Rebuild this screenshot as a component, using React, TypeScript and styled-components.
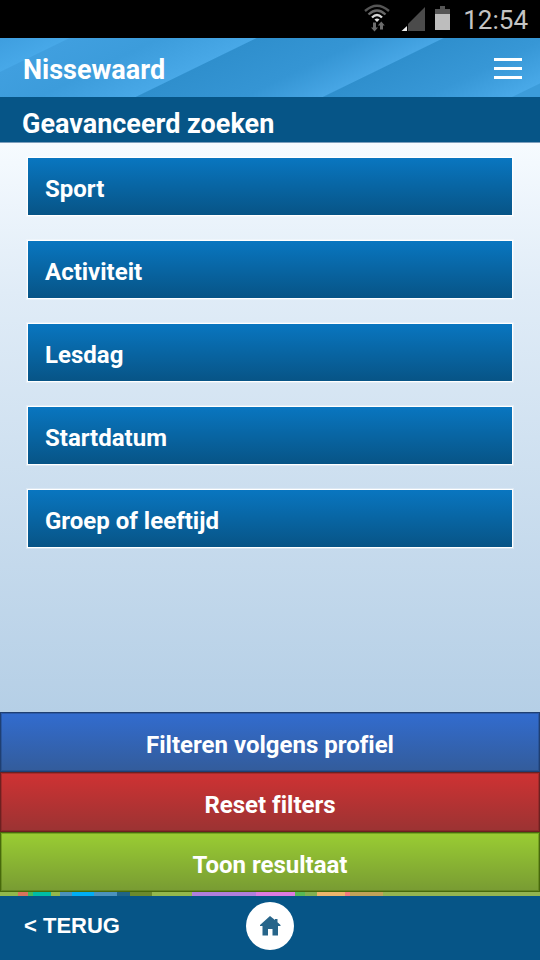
import React from "react";
import styled, { createGlobalStyle } from "styled-components";

const GlobalStyle = createGlobalStyle`
  *, *::before, *::after { box-sizing: border-box; }
  body {
    margin: 0;
    font-family: Roboto, "Liberation Sans", sans-serif;
    font-variant-ligatures: none;
  }
  button { font: inherit; font-variant-ligatures: none; cursor: pointer; }
`;

const Screen = styled.div`
  display: flex;
  flex-direction: column;
  min-height: 100vh;
  background: #b5cfe6;
`;

const StatusBar = styled.div`
  display: flex;
  align-items: center;
  justify-content: flex-end;
  height: 38px;
  padding: 2px 12px 0 0;
  background: #000;
  color: #c4c4c4;
`;

const StatusIcons = styled.svg`
  display: block;
  width: 90px;
  height: 36px;
  margin-right: 10px;
`;

const Clock = styled.time`
  font-size: 26px;
  line-height: 36px;
`;

const Header = styled.header`
  display: flex;
  align-items: center;
  justify-content: space-between;
  height: 59px;
  padding: 4px 18px 0 23px;
  background: linear-gradient(
    154deg,
    #3e9edf 0,
    #47a8e8 30px,
    #409fdf 31px,
    #3c9cdb 70px,
    #48a8e7 112px,
    #2f8fcd 113px,
    #3595d4 160px,
    #47a6e5 194px,
    #2f8fcd 195px,
    #3797d6 240px,
    #49a9e8 277px,
    #3c9cda 278px
  );
`;

const Brand = styled.div`
  color: #fff;
  font-size: 27px;
  font-weight: 700;
  line-height: 32px;
`;

const MenuButton = styled.button`
  display: flex;
  flex-direction: column;
  justify-content: space-between;
  width: 28px;
  height: 21px;
  margin-bottom: 2px;
  padding: 0;
  border: 0;
  background: none;
`;

const MenuLine = styled.span`
  height: 3px;
  background: #fff;
`;

const TitleBar = styled.div`
  height: 46px;
  padding: 6px 22px 0;
  border-bottom: 1px solid #7d9fbd;
  background: #065587;
`;

const Title = styled.h1`
  margin: 0;
  color: #fff;
  font-size: 27px;
  font-weight: 700;
  line-height: 42px;
`;

const Main = styled.main`
  flex: 1;
  padding: 14px 27px;
  background: linear-gradient(#f6fbff, #e0ecf7 26%, #b5cfe6);
`;

const FilterList = styled.div`
  display: grid;
  gap: 24px;
`;

const FilterButton = styled.button`
  height: 59px;
  padding: 5px 17px 0;
  border: 1px solid #fff;
  background: linear-gradient(#0976c0, #075486);
  box-shadow: 0 0 0 1px rgba(255, 255, 255, 0.3);
  color: #fff;
  font-size: 24px;
  font-weight: 700;
  line-height: 28px;
  text-align: left;
`;

const Actions = styled.div`
  display: grid;
`;

const tones = {
  blue: { from: "#326ccf", to: "#335c9b", edge: "#1f3f72" },
  red: { from: "#cf3233", to: "#9b3333", edge: "#6d2020" },
  green: { from: "#9acd33", to: "#789b33", edge: "#47690b" },
};

const ActionButton = styled.button<{ $tone: keyof typeof tones }>`
  height: 60px;
  padding: 6px 16px 0;
  border: 1px solid ${(p) => tones[p.$tone].edge};
  background: linear-gradient(
    ${(p) => tones[p.$tone].from},
    ${(p) => tones[p.$tone].to}
  );
  box-shadow: inset 0 0 0 1px ${(p) => tones[p.$tone].edge}66;
  color: #fff;
  font-size: 24px;
  font-weight: 700;
  line-height: 28px;
`;

const ColourStrip = styled.div`
  display: flex;
  height: 4px;
`;

const Swatch = styled.span<{ $share: number; $colour: string }>`
  flex: ${(p) => p.$share} 1 0;
  background: ${(p) => p.$colour};
`;

const Footer = styled.footer`
  display: grid;
  grid-template-columns: 1fr auto 1fr;
  align-items: center;
  height: 64px;
  padding: 0 24px 4px;
  background: #065587;
`;

const BackLink = styled.a`
  justify-self: start;
  color: #fff;
  font-family: "Liberation Sans", Arial, sans-serif;
  font-size: 22px;
  font-weight: 700;
  line-height: 28px;
  text-decoration: none;
`;

const HomeLink = styled.a`
  display: grid;
  place-items: center;
  width: 48px;
  height: 48px;
  border-radius: 50%;
  background: #fff;
`;

const filters = ["Sport", "Activiteit", "Lesdag", "Startdatum", "Groep of leeftijd"];

const strip: [number, string][] = [
  [18, "#93b84c"], [10, "#d8735c"], [5, "#46b85a"], [18, "#00bda6"],
  [9, "#93b84c"], [12, "#4b92bd"], [22, "#00aef5"], [23, "#4b92bd"],
  [13, "#1f6487"], [22, "#6b8a2c"], [40, "#93b84c"], [64, "#b07fdc"],
  [39, "#dd7be0"], [10, "#58b955"], [12, "#82b050"], [28, "#edb56c"],
  [5, "#f47c7c"], [33, "#c0a258"], [157, "#93b450"],
];

export default function App() {
  return (
    <Screen>
      <GlobalStyle />
      <StatusBar>
        <StatusIcons viewBox="0 0 90 36" aria-hidden="true">
          <g fill="none" strokeWidth="2.4">
            <path d="M2 9Q14 -1.500 26 9" stroke="#555" />
            <path d="M5.500 12.500Q14 4.500 22.500 12.500" stroke="#686868" />
            <path d="M9 15.500Q14 10.500 19 15.500" stroke="#d6d6d6" />
          </g>
          <path d="M11.500 17.500Q14 15.500 16.500 17.500L14 20Z" fill="#e0e0e0" />
          <path
            d="M10 20.500h3v5h2l-3.500 4L8 25.500h2zM17 27.500v-4h-2.200l3.500-4 3.500 4H20v4z"
            fill="#6c6c6c"
          />
          <path d="M62 5V29H45V22Z" fill="#4b4b4b" />
          <path d="M44 24V29H38.500Z" fill="#ececec" />
          <path d="M77 4h5v3h5v5H72V7h5z" fill="#555" />
          <path d="M72 12h15v16H72z" fill="#bdbdbd" />
        </StatusIcons>
        <Clock>12:54</Clock>
      </StatusBar>
      <Header>
        <Brand>Nissewaard</Brand>
        <MenuButton type="button" aria-label="Menu">
          <MenuLine />
          <MenuLine />
          <MenuLine />
        </MenuButton>
      </Header>
      <TitleBar>
        <Title>Geavanceerd zoeken</Title>
      </TitleBar>
      <Main>
        <FilterList>
          {filters.map((name) => (
            <FilterButton type="button" key={name}>
              {name}
            </FilterButton>
          ))}
        </FilterList>
      </Main>
      <Actions>
        <ActionButton type="button" $tone="blue">Filteren volgens profiel</ActionButton>
        <ActionButton type="button" $tone="red">Reset filters</ActionButton>
        <ActionButton type="button" $tone="green">Toon resultaat</ActionButton>
      </Actions>
      <ColourStrip>
        {strip.map(([share, colour], i) => (
          <Swatch key={i} $share={share} $colour={colour} />
        ))}
      </ColourStrip>
      <Footer>
        <BackLink href="#terug">&lt; TERUG</BackLink>
        <HomeLink href="#home" aria-label="Home">
          <svg width="22" height="20" viewBox="0 0 22 20" aria-hidden="true">
            <path
              d="M11 0 16 4V3H18.500V6.200L21.500 9V10H19V19.500H13.500V13H9V19.500H3.500V10H1V9Z"
              fill="#27658a"
            />
          </svg>
        </HomeLink>
      </Footer>
    </Screen>
  );
}
